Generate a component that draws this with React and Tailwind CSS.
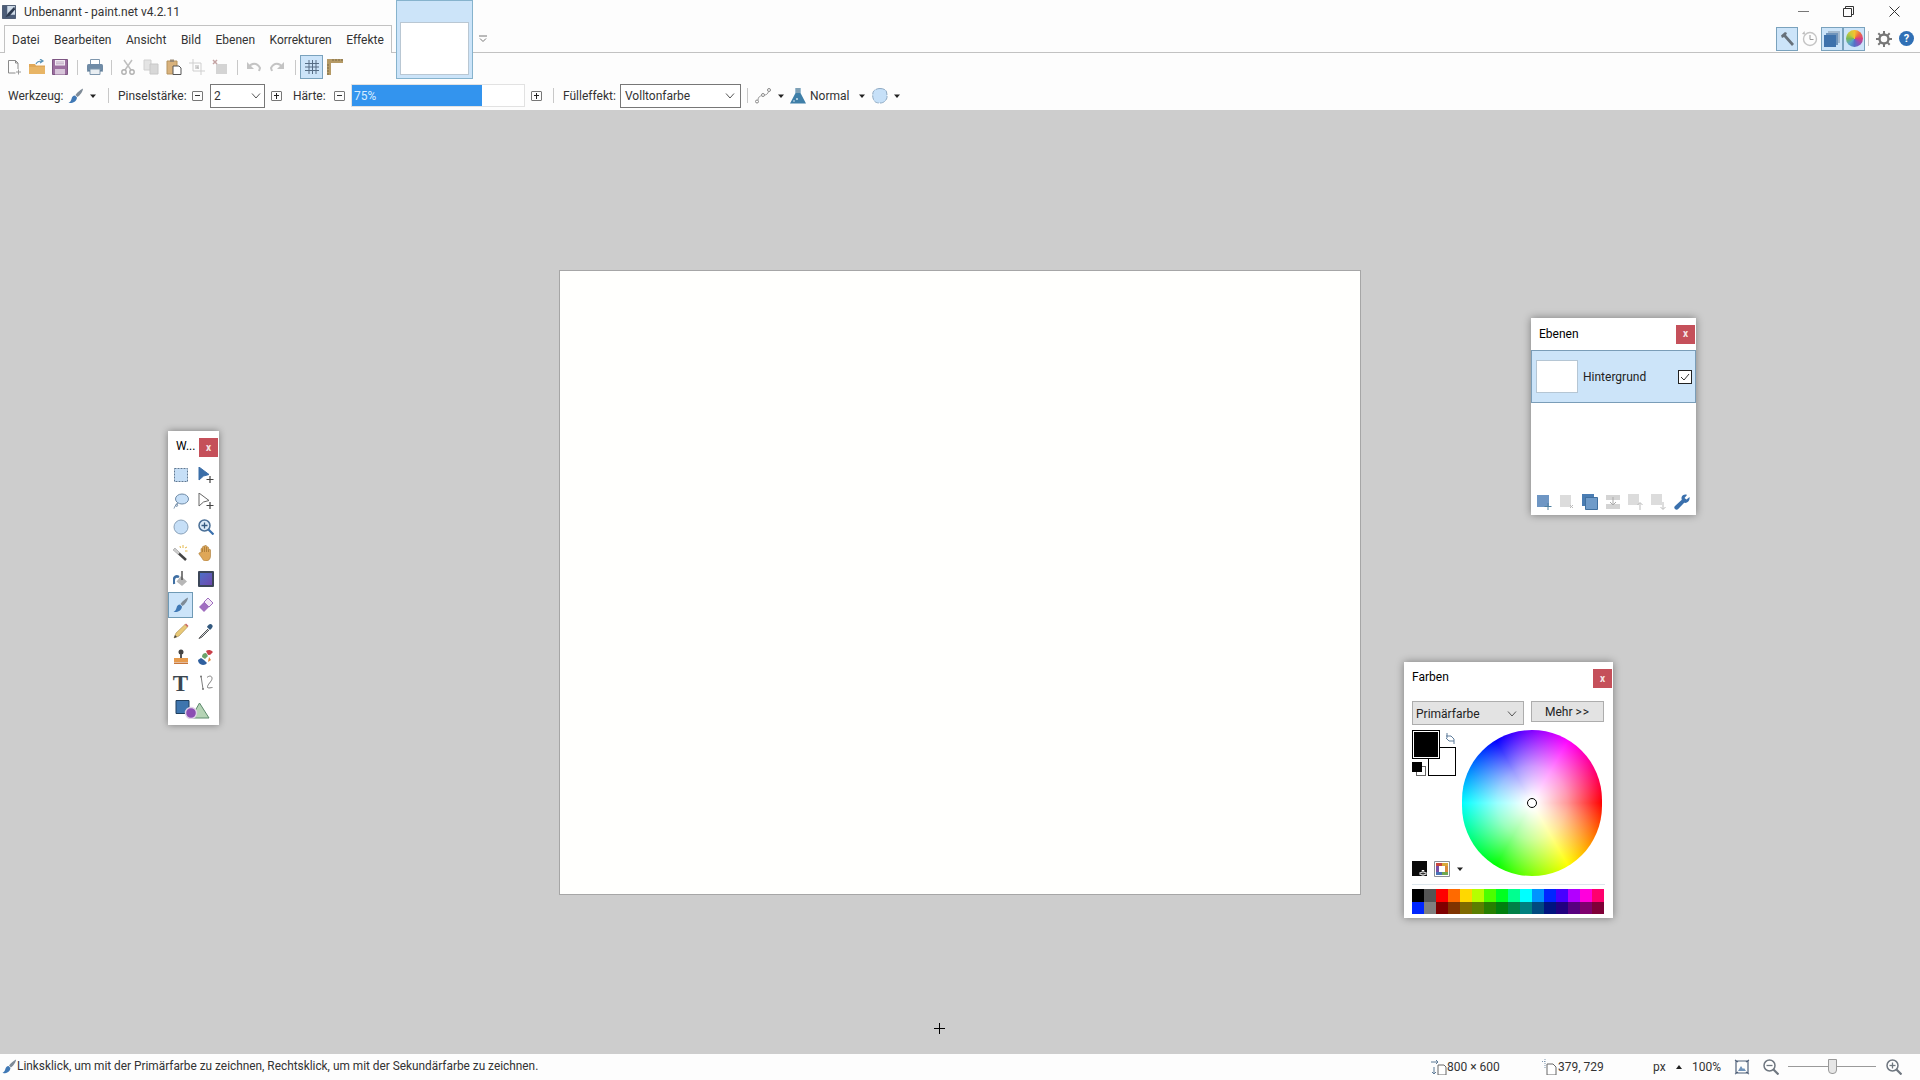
import React from 'react';

const Svg = ({ className = 'w-4 h-4', vb = '0 0 16 16', children }) => (
  <svg viewBox={vb} className={`shrink-0 ${className}`} fill="none">{children}</svg>
);

const Caret = ({ className = '' }) => (
  <svg viewBox="0 0 6 4" className={`h-1 w-1.5 shrink-0 ${className}`}><path d="M0 .5h6L3 4z" fill="#222" /></svg>
);

// toolbar icons
const NewIcon = () => <Svg><path d="M2.5 1.5h7l2.5 2.500v6M2.500 1.500v12.500h7" stroke="#8a8a8a" /><path d="M9.500 1.500V4H12" stroke="#8a8a8a" /><path d="M12.500 10.500v5M10 13h5" stroke="#9a9a9a" /></Svg>;
const OpenIcon = () => <Svg><path d="M0 5h6l1 1.500h9V15H0z" fill="#dfa758" /><path d="M0 8h16v7H0z" fill="#e8b566" /><path d="M7 5c1-2.500 3-3 6-3M11 0l3 2-3 2" stroke="#5a93b8" strokeWidth="1.200" /></Svg>;
const SaveIcon = () => <Svg><path d="M.500.500h15v15H.500z" fill="#9c6fa0" stroke="#7e5683" /><path d="M3 1h10v5.500H3z" fill="#f3edf4" /><path d="M3 10h10v5.500H3z" fill="#d8c6da" /><path d="M4 3h8M4 4.800h8" stroke="#bda6c0" /></Svg>;
const PrintIcon = () => <Svg><path d="M3.500.500h9V6h-9z" fill="#fff" stroke="#7f97ad" /><rect y="5" width="16" height="7" rx="1.500" fill="#6f8ba6" /><path d="M3 10h10v5.500H3z" fill="#e9eef2" stroke="#7f97ad" /><path d="M0 12h3M13 12h3" stroke="#53728f" /></Svg>;
const CutIcon = () => <Svg><path d="M4 1l7 10M12 1L5 11" stroke="#bfbfbf" strokeWidth="1.500" /><circle cx="4" cy="13" r="2.200" stroke="#b0b0b0" strokeWidth="1.400" /><circle cx="12" cy="13" r="2.200" stroke="#b0b0b0" strokeWidth="1.400" /></Svg>;
const CopyIcon = () => <Svg><path d="M1 1h7v10H1z" fill="#e4e4e4" stroke="#d0d0d0" /><path d="M7 5h8v10H7z" fill="#d8d8d8" stroke="#c8c8c8" /></Svg>;
const PasteIcon = () => <Svg><path d="M1 2h10v13H1z" fill="#d9b27c" stroke="#b5935f" /><path d="M4 .500h4V3H4z" fill="#9a8a75" /><path d="M7 7h6l2 2v6.500H7z" fill="#fff" stroke="#555" /></Svg>;
const CropIcon = () => <Svg><path d="M4 0v12h12M0 4h12v12" stroke="#cfcfcf" /><path d="M6 6h4v4H6z" fill="#d8d8d8" /><path d="M7 9l2-2 1 3z" fill="#bdbdbd" /></Svg>;
const DeleteIcon = () => <Svg><path d="M4 5h11v10H4z" fill="#d4d4d4" /><path d="M1 1l4 4M5 1L1 5" stroke="#c4a4a4" strokeWidth="1.500" /></Svg>;
const UndoIcon = () => <Svg><path d="M3 8c2-4 8-5 11 1l-1 3" stroke="#c4c4c4" strokeWidth="2" /><path d="M1 3v7h7z" fill="#c4c4c4" /></Svg>;
const RedoIcon = () => <Svg><path d="M13 8c-2-4-8-5-11 1l1 3" stroke="#c4c4c4" strokeWidth="2" /><path d="M15 3v7H8z" fill="#c4c4c4" /></Svg>;
const GridIcon = () => <Svg><path d="M5 1v14M8.500 1v14M12 1v14M1 4.500h14M1 8h14M1 11.500h14" stroke="#566d85" /></Svg>;
const RulerIcon = () => <Svg><path d="M0 0h16v4H4v12H0z" fill="#b59a66" /><path d="M6 0v2M9 0v2M12 0v2M15 0v2M0 6h2M0 9h2M0 12h2M0 15h2" stroke="#7d6a44" /></Svg>;

const BrushIcon = ({ className }) => <Svg className={className}><path d="M15 .500c-2 1-6 4-7.500 6.500l2 2C12 7.500 15 3 15 .500z" fill="#7f8b97" /><path d="M7 7.500c-2 0-3 1.500-3.500 3.500S2 14 .500 15c4 .500 8-1 8.500-5.500z" fill="#3f78b5" /></Svg>;
const PathIcon = () => <Svg><circle cx="2" cy="13.500" r="1.500" stroke="#888" /><circle cx="8" cy="7" r="1.500" stroke="#888" /><circle cx="14" cy="2" r="1.500" stroke="#888" /><path d="M3 12c0-3 2-4 4-4.500M9.500 7C11 7 13 6 13.500 3.500" stroke="#999" /></Svg>;
const FlaskIcon = () => <Svg><path d="M5.500 0v5L0 15.500h16L10.500 5V0" fill="#3f7fa8" /><path d="M6 0v5H10V0z" fill="#7fa0b5" /><path d="M3 13h2" stroke="#cfe2ee" /><circle cx="7" cy="11" r="1" fill="#cfe2ee" /></Svg>;
const BlobIcon = () => <Svg><path d="M8 .500c3 0 6 1 6.500 3.500s1 5 0 7-3 4-6.500 4-5.500-1-6.500-3.500S.500 7 1 4.500 5 .500 8 .500z" fill="#c6e0f8" stroke="#8ea9c2" strokeDasharray="5 1" /></Svg>;

const HammerIcon = () => <Svg><path d="M2 4.500L6 1l2 1-1 2 8 9-2 2-8-9-2 1z" fill="#66707a" /></Svg>;
const ClockIcon = () => <Svg><circle cx="8" cy="8" r="6.500" stroke="#c4c4c4" strokeWidth="1.400" /><path d="M8 4v4.500h3.500" stroke="#999" /><path d="M0 3l3 .500L2.500 0z" fill="#bbb" /></Svg>;
const LayersIcon = () => <Svg><path d="M4 0h12v12H4z" fill="#a3b9cf" /><path d="M2 2h12v12H2z" fill="#6e93bb" /><path d="M0 4h12v12H0z" fill="#3f72ac" /></Svg>;
const GearIcon = () => <Svg><circle cx="8" cy="8" r="4.500" stroke="#777" strokeWidth="2.400" /><path d="M8 0v3M8 13v3M0 8h3M13 8h3M2.300 2.300l2.100 2.100M11.600 11.600l2.100 2.100M13.700 2.300l-2.100 2.100M4.400 11.600l-2.100 2.100" stroke="#777" strokeWidth="2" /></Svg>;

const ColorsIcon = () => (
  <div className="h-[17px] w-[17px] rounded-full bg-[conic-gradient(#f2c230,#ee7040,#d93f7c,#8e53b8,#5570c8,#5aa7c8,#79b958,#c7c93c,#f2c230)]" />
);
const HelpIcon = () => (
  <div className="flex h-[15px] w-[15px] items-center justify-center rounded-full bg-[#2f6fb5] text-[11px] font-bold leading-none text-white">?</div>
);

// tool window icons
const RectSel = () => <Svg><path d="M1.500 1.500h13v13h-13z" fill="#c6dff7" stroke="#5f7893" strokeDasharray="2 1" /></Svg>;
const MoveSel = ({ light }) => (
  <Svg>
    <path d="M1 0l10 7.500-5.500 1.500L1 13z" fill={light ? '#fff' : '#3b6ea8'} stroke={light ? '#666' : '#3b6ea8'} />
    <path d="M12 9v7M8.500 12.500h7" stroke="#444" strokeWidth="1.200" />
  </Svg>
);
const Lasso = () => <Svg><ellipse cx="9" cy="6" rx="6.500" ry="5" fill="#c6dff7" stroke="#6e8aa6" /><path d="M5 10c-2 1-3 2-2 3s2 0 1.500-1.500S2 13 1 15.500" stroke="#6e8aa6" /></Svg>;
const Ellipse = () => <Svg><circle cx="8" cy="8" r="7" fill="#c6dff7" stroke="#8aa2ba" /></Svg>;
const Zoom = () => <Svg><circle cx="6.500" cy="6.500" r="5.500" fill="#dcebf8" stroke="#4a6f96" strokeWidth="1.500" /><path d="M6.500 3.500v6M3.500 6.500h6" stroke="#34597f" strokeWidth="1.300" /><path d="M10.500 10.500l5 5" stroke="#3a70ad" strokeWidth="2.200" /></Svg>;
const Wand = () => <Svg><path d="M1 4l12 11" stroke="#444" strokeWidth="2.500" /><path d="M1 4l5 4.500" stroke="#ccc" strokeWidth="2.500" /><path d="M7 1l.5 2M10 0v3M12 3l2-1M12 6h2.500" stroke="#e3b84c" /></Svg>;
const Hand = () => <Svg><path d="M3 8V4c0-1 1.500-1 1.500 0v3-5c0-1 2-1 2 0v5V1c0-1 2-1 2 0v6V2.500c0-1 2-1 2 0V7V5c0-1 2-1 2 0v6c0 3-2 5-4.500 5S5 15 4 13l-3-4c-.500-1 1-2 2-1z" fill="#dfa758" stroke="#a87a38" strokeWidth=".6" /></Svg>;
const Bucket = () => <Svg><path d="M8 5l6 5.500L9 15 3.500 10.500z" fill="#b7b7b7" /><path d="M9 0v9" stroke="#555" strokeWidth="1.500" /><path d="M6 6C2 4 0 7 1 13" stroke="#3f6fa3" strokeWidth="2.500" /></Svg>;
const GradientSq = () => <div className="h-4 w-4 rounded-[1px] border-2 border-[#3c4658] bg-gradient-to-br from-[#4a6fc8] to-[#6c48ae]" />;
const Eraser = () => <Svg><path d="M10 1l5 5-9 9-5-5z" fill="#a06ec0" /><path d="M10 1l5 5-4 4-5-5z" fill="#f2e9f6" stroke="#a06ec0" /></Svg>;
const Pencil = () => <Svg><path d="M1 15l2-5L12 1.500l2.500 2.500L6 13z" fill="#e9c977" stroke="#a78c4e" strokeWidth=".6" /><path d="M12 1.500l2.500 2.500 1-1-2.500-2.500z" fill="#c9605c" /><path d="M1 15l1-3 2 2z" fill="#444" /></Svg>;
const Picker = () => <Svg><path d="M10 6l-7 7-2 2.500 3-1.500 7-7" fill="#cfd6dc" stroke="#555" /><path d="M9 4l3 3 1.500-1.500 1-1.500c1-2-2-4-3.500-2.500L9.500 3z" fill="#33597f" /></Svg>;
const Stamp = () => <Svg><circle cx="8" cy="3" r="2.500" fill="#444" /><path d="M7 5h2v5H7z" fill="#555" /><path d="M1 9h14v4H1z" fill="#e69a4c" /><path d="M1 13.500h14V15H1z" fill="#c7763a" /></Svg>;
const Recolor = () => (
  <Svg>
    <path d="M8 2a5 5 0 0 1 7 1l-3 3a2 2 0 0 0-2 0z" fill="#c9404a" />
    <path d="M4 8a4 4 0 0 1 4-4l2 3-3 3z" fill="#6ba36b" />
    <path d="M0 11a5 5 0 0 0 5 5c2 0 3-1 4-2l-3-3-3-2z" fill="#2f5f9e" />
    <path d="M11 8l2 3-3 2z" fill="#e08a3c" />
  </Svg>
);
const LineTool = () => <Svg><path d="M3 1l2 13M9 2.500c2-2 5-2 5 1s-5 6-4.500 9c2 1 3 0 5 0" stroke="#7d7d7d" /><circle cx="3" cy="1.500" r="1" fill="#777" /><circle cx="5" cy="14" r="1" fill="#777" /></Svg>;
const Shapes = () => (
  <Svg className="h-[19px] w-[36px]" vb="0 0 36 19">
    <path d="M1 .500h13v13H1z" fill="#3e75ae" stroke="#1f3f5e" />
    <path d="M24.500 3L34 18H16z" fill="#b5d3b5" stroke="#5c8a6c" />
    <circle cx="16" cy="13" r="5.500" fill="#8b4db3" stroke="#ded1e6" strokeWidth="1.400" />
  </Svg>
);

// layer window icons
const LayerNew = () => <Svg><path d="M1 1h12v12H1z" fill="#6e96c4" /><path d="M12 9v7M8.500 12.500h7" stroke="#4d7fa0" /></Svg>;
const LayerDel = () => <Svg><path d="M1 1h11v12H1z" fill="#dcdcdc" /><path d="M11 11l3 3M14 11l-3 3" stroke="#bbb" /></Svg>;
const LayerDup = () => <Svg><path d="M0 0h12v12H0z" fill="#4a7db3" /><path d="M3.500 3.500h12v12h-12z" fill="#6f9bc9" stroke="#3f6f9f" /></Svg>;
const LayerMerge = () => <Svg><path d="M1 1h14v5H1zM1 10h14v5H1z" fill="#d4d4d4" /><path d="M8 3v8M5 8l3 3 3-3" stroke="#aaa" /></Svg>;
const LayerUp = () => <Svg><path d="M0 0h11v11H0z" fill="#dcdcdc" /><path d="M12 16V9M9.500 11l2.500-2.500 2.500 2.500" stroke="#bbb" /></Svg>;
const LayerDown = () => <Svg><path d="M0 0h11v11H0z" fill="#dcdcdc" /><path d="M12 8v7M9.500 13l2.500 2.500 2.500-2.500" stroke="#bbb" /></Svg>;
const Wrench = () => <Svg><path d="M15.500 3l-3 2.500L10.500 4 13 1c-2-1-5 0-5.500 2.500 0 1 0 1.500.3 2.200L1 12c-1 1-1 2 0 3s2.500.7 3.200 0l6-6.200c3 .800 6-2 5.300-5.800z" fill="#3a70ad" /></Svg>;

// color window icons
const AddColor = () => <Svg><path d="M0 0h15v15H0z" fill="#0a0a0a" /><path d="M11 9v7M7.500 12.500h7" stroke="#fff" strokeWidth="2.500" /><path d="M11 10v5M8.500 12.500h5" stroke="#333" /></Svg>;
const PaletteIcon = () => (
  <Svg>
    <path d="M.500.500h15v15H.500z" fill="#fff" stroke="#8a8f96" />
    <path d="M2 2h6v3H2z" fill="#c8473d" /><path d="M8 2h6v3H8z" fill="#d9a73a" />
    <path d="M2 5h3v6H2z" fill="#7a4fa5" /><path d="M11 5h3v6h-3z" fill="#d98a3a" />
    <path d="M2 11h6v3H2z" fill="#4a73b8" /><path d="M8 11h6v3H8z" fill="#6fa84f" />
  </Svg>
);
const SwapIcon = () => <Svg className="h-[11px] w-[10px]" vb="0 0 10 11"><path d="M1 3h5l3 3M9 8H4L1 5" stroke="#5f7d9b" /><path d="M2 0v5M9 6v5" stroke="#5f7d9b" /></Svg>;

// status bar icons
const SizeIcon = () => <Svg><path d="M0 3h7M5 1l2 2-2 2M3 8v7M1 13l2 2 2-2" stroke="#5d7a96" /><path d="M7 6h6l2 2v8H7z" fill="#fff" stroke="#666" /></Svg>;
const CursorIcon = () => <Svg><path d="M0 2.500h4M3 0v9" stroke="#7d95ac" strokeDasharray="1 1" /><path d="M5 5h6l3 3v8H5z" fill="#fff" stroke="#666" /></Svg>;
const FitIcon = () => <Svg><path d="M1 1l3 2M15 1l-3 2M1 15l3-2M15 15l-3-2M2 2h12v12H2z" stroke="#4f6079" strokeWidth="1.200" /><path d="M4 12l3-5 2 3 1-1 2 3z" fill="#6f93ba" /></Svg>;
const ZoomGlass = ({ plus }) => <Svg><circle cx="6.500" cy="6.500" r="5.500" stroke="#6f7780" strokeWidth="1.500" fill="#fff" /><path d="M3.500 6.500h6" stroke="#6f7780" strokeWidth="1.300" />{plus && <path d="M6.500 3.500v6" stroke="#6f7780" strokeWidth="1.300" />}<path d="M10.500 10.500l5 5" stroke="#6f7780" strokeWidth="2.200" /></Svg>;

const MinusBox = () => <div className="relative h-[10px] w-[11px] shrink-0 rounded-[1px] border border-[#777]"><div className="absolute left-[2px] right-[2px] top-[3px] h-px bg-[#333]" /></div>;
const PlusBox = () => (
  <div className="relative h-[10px] w-[11px] shrink-0 rounded-[1px] border border-[#777]">
    <div className="absolute left-[2px] right-[2px] top-[3px] h-px bg-[#222]" />
    <div className="absolute bottom-[1px] left-[4px] top-[1px] w-px bg-[#222]" />
  </div>
);

const Chevron = () => <svg viewBox="0 0 10 6" className="h-[6px] w-[10px] shrink-0"><path d="M1 .500l4 4.500 4-4.500" stroke="#555" fill="none" /></svg>;

const Sep = ({ className }) => <div className={`h-[15px] w-px shrink-0 bg-[#c8c8c8] ${className}`} />;

const Cell = ({ children, active }) => (
  <div className={`flex h-6 w-[23px] shrink-0 items-center justify-center ${active ? 'border border-[#7aa2bd] bg-[#cce4f9]' : ''}`}>{children}</div>
);

const CloseBtn = () => (
  <div className="flex h-[19px] w-[19px] shrink-0 items-center justify-center bg-[#c5505a] text-[10px] font-bold leading-none text-[#f6e6e6]">x</div>
);

const MENU = ['Datei', 'Bearbeiten', 'Ansicht', 'Bild', 'Ebenen', 'Korrekturen', 'Effekte'];

const TOOLS = [
  [RectSel, MoveSel], [Lasso, () => <MoveSel light />], [Ellipse, Zoom], [Wand, Hand], [Bucket, GradientSq],
  [BrushIcon, Eraser], [Pencil, Picker], [Stamp, Recolor],
];

const PALETTE = [
  '#000000', '#555555', '#ff0000', '#ff6a00', '#ffd800', '#b6ff00', '#4cff00', '#00ff21', '#00ff90', '#00ffff', '#0094ff', '#0026ff', '#4800ff', '#b200ff', '#ff00dc', '#ff006e',
  '#0026ff', '#808080', '#7f0000', '#7f3300', '#7f6a00', '#5b7f00', '#267f00', '#007f0e', '#007f46', '#007f7f', '#004a7f', '#00137f', '#21007f', '#57007f', '#7f006e', '#7f0037',
];

function ToolsWindow() {
  return (
    <div className="absolute left-[168px] top-[431px] flex h-[294px] w-[51px] flex-col bg-white shadow-[0_0_7px_rgba(0,0,0,0.4)]">
      <div className="flex h-[31px] items-start pl-2 pr-px pt-[7px]">
        <span className="flex-1 text-xs text-black">W...</span>
        <CloseBtn />
      </div>
      <div className="grid grid-cols-[25px_25px]">
        {TOOLS.map(([Left, Right], i) => (
          <React.Fragment key={i}>
            <div className={`flex h-[26px] items-center justify-center ${i === 5 ? 'border border-[#6f9ab5] bg-[#cce4f9]' : ''}`}><Left /></div>
            <div className="flex h-[26px] items-center justify-center"><Right /></div>
          </React.Fragment>
        ))}
        <div className="flex h-[26px] items-center justify-center font-['Liberation_Serif',serif] text-[23px] font-bold leading-none text-[#3c4650]">T</div>
        <div className="flex h-[26px] items-center justify-center"><LineTool /></div>
        <div className="col-span-2 flex h-[26px] items-center justify-center"><Shapes /></div>
      </div>
    </div>
  );
}

function LayersWindow() {
  const icons = [LayerNew, LayerDel, LayerDup, LayerMerge, LayerUp, LayerDown, Wrench];
  return (
    <div className="absolute left-[1531px] top-[318px] flex h-[197px] w-[165px] flex-col bg-white shadow-[0_0_8px_rgba(0,0,0,0.4)]">
      <div className="flex h-[32px] items-center justify-between pl-2 pr-px text-xs text-black">
        <span>Ebenen</span>
        <CloseBtn />
      </div>
      <div className="flex h-[53px] items-center border border-[#7a9db8] bg-[#cce4f9] pl-1 pr-[3px]">
        <div className="h-[33px] w-[42px] border border-[#b5c6d4] bg-white" />
        <span className="ml-[5px] flex-1 text-xs text-[#222]">Hintergrund</span>
        <div className="flex h-[14px] w-[14px] items-center justify-center border border-[#222] bg-white">
          <svg viewBox="0 0 12 12" className="h-3 w-3"><path d="M2 6l3 3 5-6" stroke="#333" fill="none" /></svg>
        </div>
      </div>
      <div className="flex-1" />
      <div className="flex h-[23px] items-start pl-px">
        {icons.map((Icon, i) => (
          <div key={i} className="flex h-5 w-[23px] items-center justify-center"><Icon /></div>
        ))}
      </div>
    </div>
  );
}

function ColorsWindow() {
  return (
    <div className="absolute left-[1404px] top-[662px] flex h-[256px] w-[209px] flex-col bg-white px-2 shadow-[0_0_8px_rgba(0,0,0,0.4)]">
      <div className="-mr-2 flex h-[39px] items-start justify-between pt-[7px] text-xs text-black">
        <span>Farben</span>
        <div className="mr-px"><CloseBtn /></div>
      </div>
      <div className="flex items-start gap-[7px]">
        <div className="flex h-6 w-[112px] items-center justify-between border border-[#adadad] bg-[#e3e3e3] pl-[3px] pr-[6px] pt-[2px] text-xs text-[#222]">
          Primärfarbe
          <Chevron />
        </div>
        <div className="flex h-[21px] w-[73px] items-center justify-center gap-[3px] border border-[#adadad] bg-[#e3e3e3] text-xs text-[#222]">
          <span>Mehr</span>
          <span className="tracking-[1px]">&gt;&gt;</span>
        </div>
      </div>
      <div className="mt-[5px] flex">
        <div className="relative h-[47px] w-[50px] shrink-0">
          <div className="absolute left-0 top-0 z-10 h-[29px] w-[28px] border border-black bg-black outline outline-1 -outline-offset-2 outline-white" />
          <div className="absolute left-4 top-[17px] h-[29px] w-[28px] border border-black bg-white" />
          <div className="absolute left-[33px] top-[3px]"><SwapIcon /></div>
          <div className="absolute left-1 top-[36px] h-[10px] w-[10px] border border-[#666] bg-white" />
          <div className="absolute left-0 top-[32px] h-[10px] w-[10px] bg-black" />
        </div>
        <div className="relative h-[146px] w-[140px] rounded-full bg-[radial-gradient(closest-side,#ffffff_6%,#ffffff99_50%,#ffffff00),conic-gradient(from_90deg,#ff0000,#ffff00,#00ff00,#00ffff,#0000ff,#ff00ff,#ff0000)]">
          <div className="absolute left-[65px] top-[68px] h-[10px] w-[10px] rounded-full border border-black" />
        </div>
      </div>
      <div className="-mt-[15px] flex items-center">
        <div className="h-4 w-4"><AddColor /></div>
        <div className="ml-[6px]"><PaletteIcon /></div>
        <Caret className="ml-[7px]" />
      </div>
      <div className="mt-[7px] h-px bg-[#dce6ec]" />
      <div className="mt-[4px] grid w-[192px] grid-cols-[repeat(16,12px)]">
        {PALETTE.map((c, i) => (
          <div key={i} className="h-[12.5px]" style={{ backgroundColor: c }} />
        ))}
      </div>
    </div>
  );
}

export default function App() {
  return (
    <div className="relative flex h-screen w-full flex-col overflow-hidden bg-[#fdfdfd] font-['Roboto',sans-serif] text-xs text-[#333]">
      <div className="flex h-[25px] shrink-0 items-center pb-[2px] pl-[2px]">
        <Svg className="h-[14px] w-[14px]">
          <path d="M.500.500h15v15H.500z" fill="#cfdbe8" stroke="#34435c" />
          <path d="M1 1h5v14H1zM6 11h9v4H6z" fill="#4c5d78" />
          <path d="M14 2L7 9l-3 5 5-2 6-7z" fill="#2d3a4f" />
        </Svg>
        <span className="ml-[8px] text-xs text-[#333]">Unbenannt - paint.net v4.2.11</span>
        <div className="ml-auto flex items-center">
          <div className="h-px w-[11px] bg-[#777]" />
          <svg viewBox="0 0 11 11" className="ml-[34px] h-[11px] w-[11px]"><path d="M.500 2.500h8v8h-8zM2.500 2.500v-2h8v8h-2" stroke="#333" fill="none" /></svg>
          <svg viewBox="0 0 11 11" className="ml-[35px] mr-[20px] h-[11px] w-[11px]"><path d="M.500.500l10 10M10.500.500l-10 10" stroke="#333" /></svg>
        </div>
      </div>

      <div className="flex h-[28px] shrink-0 border-b border-[#c2c2c2] pl-1">
        <div className="-mb-px flex h-[28px] w-[388px] items-center gap-[14.500px] border border-b-0 border-[#c2c2c2] bg-[#fdfdfd] pl-[7px]">
          {MENU.map((m) => (
            <span key={m} className="text-xs text-[#333]">{m}</span>
          ))}
        </div>
        <svg viewBox="0 0 10 8" className="ml-[86px] mt-[10px] h-2 w-[10px]"><path d="M1 1h8M2 3.500l3 3 3-3" stroke="#777" fill="none" /></svg>
        <div className="ml-auto flex h-[27px] items-center pr-[6px]">
          <div className="flex h-6 w-[22px] items-center justify-center border border-[#7aa2bd] bg-[#cce4f9]"><HammerIcon /></div>
          <div className="flex h-6 w-[23px] items-center justify-center"><ClockIcon /></div>
          <div className="flex h-6 w-[22px] items-center justify-center border border-[#7aa2bd] bg-[#cce4f9]"><LayersIcon /></div>
          <div className="flex h-6 w-[22px] items-center justify-center border border-[#7aa2bd] bg-[#cce4f9]"><ColorsIcon /></div>
          <Sep className="ml-[3px]" />
          <div className="ml-[7px]"><GearIcon /></div>
          <div className="ml-[7px]"><HelpIcon /></div>
        </div>
      </div>

      <div className="flex h-[30px] shrink-0 items-center pb-[2px] pl-[2px]">
        <Cell><NewIcon /></Cell>
        <Cell><OpenIcon /></Cell>
        <Cell><SaveIcon /></Cell>
        <Sep className="ml-[6px] mr-[5px]" />
        <Cell><PrintIcon /></Cell>
        <Sep className="ml-[5px] mr-[4px]" />
        <Cell><CutIcon /></Cell>
        <Cell><CopyIcon /></Cell>
        <Cell><PasteIcon /></Cell>
        <Cell><CropIcon /></Cell>
        <Cell><DeleteIcon /></Cell>
        <Sep className="ml-[6px] mr-1" />
        <Cell><UndoIcon /></Cell>
        <Cell><RedoIcon /></Cell>
        <Sep className="ml-[7px] mr-1" />
        <Cell active><GridIcon /></Cell>
        <Cell><RulerIcon /></Cell>
      </div>

      <div className="flex h-[27px] shrink-0 items-center pb-[2px] pl-2 text-xs text-[#333]">
        <span className="w-[60px]">Werkzeug:</span>
        <BrushIcon />
        <Caret className="ml-[6px]" />
        <Sep className="ml-3" />
        <span className="ml-[9px] w-[66px] whitespace-nowrap">Pinselstärke:</span>
        <div className="ml-2"><MinusBox /></div>
        <div className="ml-[7px] flex h-6 w-[55px] items-center justify-between border border-[#777] bg-white pl-[3px] pr-[3px]">
          2
          <Chevron />
        </div>
        <div className="ml-[6px]"><PlusBox /></div>
        <span className="ml-[11px] w-[32px]">Härte:</span>
        <div className="ml-[9px]"><MinusBox /></div>
        <div className="relative ml-[6px] h-[23px] w-[174px] border border-[#e2e2e2] bg-white">
          <div className="flex h-full w-[130px] items-center bg-[#3394ee] pl-[2px] text-xs text-[#d6ecff]">75%</div>
        </div>
        <div className="ml-[6px]"><PlusBox /></div>
        <Sep className="ml-[11px]" />
        <span className="ml-[9px] w-[52px] whitespace-nowrap">Fülleffekt:</span>
        <div className="ml-[5px] flex h-6 w-[121px] items-center justify-between border border-[#777] bg-white pl-[4px] pr-[5px]">
          Volltonfarbe
          <Chevron />
        </div>
        <Sep className="ml-[6px]" />
        <div className="ml-[7px]"><PathIcon /></div>
        <Caret className="ml-[7px]" />
        <div className="ml-[6px]"><FlaskIcon /></div>
        <span className="ml-1 w-[38px]">Normal</span>
        <Caret className="ml-[11px]" />
        <div className="ml-[7px]"><BlobIcon /></div>
        <Caret className="ml-[6px]" />
      </div>

      <div className="flex min-h-0 flex-1 items-center justify-center bg-[#cdcdcd]">
        <div className="h-[625px] w-[802px] border border-[#a6a6a6] bg-[#fffffd]" />
      </div>

      <div className="flex h-[26px] shrink-0 items-center bg-[#fdfdfd] pb-[1px] pl-[2px] text-xs text-[#333]">
        <BrushIcon className="h-[15px] w-[15px]" />
        <span className="whitespace-nowrap text-[11.850px]">Linksklick, um mit der Primärfarbe zu zeichnen, Rechtsklick, um mit der Sekundärfarbe zu zeichnen.</span>
        <div className="ml-auto flex items-center pr-[18px]">
          <SizeIcon />
          <span className="w-[95px]">800 × 600</span>
          <CursorIcon />
          <span className="w-[95px]">379, 729</span>
          <span className="w-[16px]">px</span>
          <svg viewBox="0 0 6 4" className="ml-[7px] h-1 w-1.5"><path d="M0 4h6L3 0z" fill="#222" /></svg>
          <span className="ml-[10px] w-[29px]">100%</span>
          <div className="ml-[13px]"><FitIcon /></div>
          <div className="ml-[13px]"><ZoomGlass /></div>
          <div className="relative ml-[9px] flex h-[15px] w-[88px] items-center">
            <div className="h-px w-full bg-[#9a9a9a]" />
            <div className="absolute left-[40px] top-0 h-[15px] w-[9px] rounded-b-[4px] border border-[#999] bg-[#e6e6e6]" />
          </div>
          <div className="ml-[10px]"><ZoomGlass plus /></div>
        </div>
      </div>

      <div className="absolute left-[396px] top-0 h-[79px] w-[77px] border border-[#86b3cd] bg-[#cce4f9] pb-[3px] pl-[3px] pr-[3px] pt-[21px]">
        <div className="h-full w-full border border-[#b9c7d3] bg-white" />
      </div>

      <ToolsWindow />
      <LayersWindow />
      <ColorsWindow />

      <div className="absolute left-[934px] top-[1023px] h-[11px] w-[11px]">
        <div className="absolute left-[5px] top-0 h-full w-px bg-black" />
        <div className="absolute left-0 top-[5px] h-px w-full bg-black" />
      </div>
    </div>
  );
}
